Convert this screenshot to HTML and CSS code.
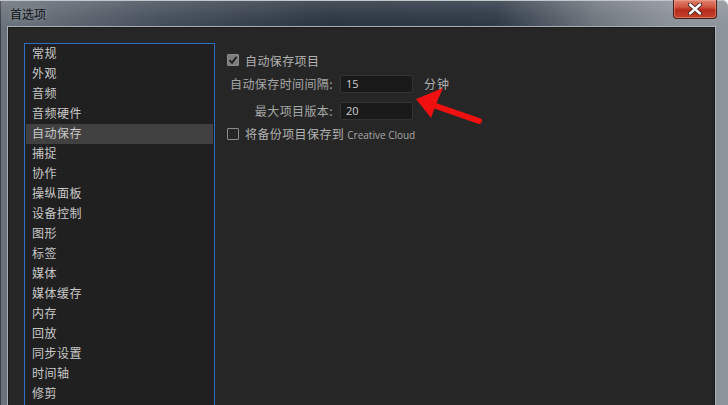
FILE: index.html
```html
<!DOCTYPE html>
<html lang="zh-CN">
<head>
<meta charset="utf-8">
<title>首选项</title>
<link rel="stylesheet" href="styles.css">
</head>
<body>
<div class="window">
  <div class="titlebar">
    <span class="title">首选项</span>
    <div class="close">
      <svg width="16" height="12" viewBox="0 0 16 12">
        <path d="M3 1.5 L13 10.5 M13 1.5 L3 10.5" stroke="#3a2020" stroke-width="4.2" stroke-linecap="round"/>
        <path d="M3 1.5 L13 10.5 M13 1.5 L3 10.5" stroke="#ffffff" stroke-width="2.4" stroke-linecap="round"/>
      </svg>
    </div>
  </div>
  <div class="client">
    <ul class="nav">
      <li>常规</li>
      <li>外观</li>
      <li>音频</li>
      <li>音频硬件</li>
      <li class="selected">自动保存</li>
      <li>捕捉</li>
      <li>协作</li>
      <li>操纵面板</li>
      <li>设备控制</li>
      <li>图形</li>
      <li>标签</li>
      <li>媒体</li>
      <li>媒体缓存</li>
      <li>内存</li>
      <li>回放</li>
      <li>同步设置</li>
      <li>时间轴</li>
      <li>修剪</li>
    </ul>
    <div class="panel">
      <div class="row row-check first">
        <span class="checkbox checked">
          <svg width="10" height="10" viewBox="0 0 10 10"><path d="M1.5 5.2 L4 7.8 L8.6 1.8" fill="none" stroke="#1e1e1e" stroke-width="1.8"/></svg>
        </span>
        <span class="check-label">自动保存项目</span>
      </div>
      <div class="row row-field">
        <span class="field-label">自动保存时间间隔:</span>
        <span class="input">15</span>
        <span class="unit">分钟</span>
      </div>
      <div class="row row-field">
        <span class="field-label">最大项目版本:</span>
        <span class="input">20</span>
      </div>
      <div class="row row-check last">
        <span class="checkbox"></span>
        <span class="check-label">将备份项目保存到 <span class="latin">Creative Cloud</span></span>
      </div>
    </div>
  </div>
  <svg class="arrow" width="728" height="405" viewBox="0 0 728 405">
    <line x1="433" y1="105" x2="479" y2="121" stroke="#f01010" stroke-width="6" stroke-linecap="round"/>
    <polygon points="416,99 443,88 436,104 431,118" fill="#f01010"/>
  </svg>
</div>
</body>
</html>
```
FILE: styles.css
```css
html, body {
  margin: 0;
  padding: 0;
  background: #ffffff;
}
body {
  width: 728px;
  height: 405px;
  overflow: hidden;
  font-family: "Noto Sans CJK SC", "Noto Sans", sans-serif;
}
.window {
  position: relative;
  width: 728px;
  height: 405px;
  display: flex;
  flex-direction: column;
  background:
    linear-gradient(90deg, #6a727b 0%, #5f6771 8%, #444e5a 22%, #2a3440 45%, #2d3845 68%, #6f767e 82%, #8b9198 92%, #8e949b 100%);
  border-top-right-radius: 6px;
  box-shadow: inset 0 1px 0 #b8bec4, inset 1px 0 0 #3a3f45;
}
.titlebar {
  height: 27px;
  flex: none;
  display: flex;
  align-items: flex-start;
  background: linear-gradient(180deg, rgba(255,255,255,0.14) 0%, rgba(255,255,255,0.04) 60%, rgba(0,0,0,0) 100%);
}
.title {
  padding-left: 10px;
  line-height: 27px;
  font-size: 12px;
  color: #101418;
  text-shadow: 0 0 6px rgba(255,255,255,0.35);
}
.close {
  margin-left: auto;
  margin-right: 11px;
  width: 42px;
  height: 18px;
  border: 1px solid #4a1e1a;
  border-top: none;
  border-radius: 0 0 4px 4px;
  background: linear-gradient(180deg, #e0836f 0%, #cf5440 40%, #b52b1a 55%, #c4442c 100%);
  box-shadow: inset 0 0 0 1px rgba(255,200,180,0.35);
  display: flex;
  align-items: center;
  justify-content: center;
}
.client {
  flex: 1;
  display: flex;
  align-items: flex-start;
  gap: 12px;
  margin: 0 13px 0 8px;
  padding: 15px 0 0 16px;
  background: #262626;
  border-top: 1px solid #1a1a1a;
  border-left: 1px solid #1a1a1a;
  border-right: 1px solid #1a1a1a;
  box-shadow: 0 0 0 1px #a9b0b7;
  overflow: hidden;
  min-height: 0;
}
.nav {
  list-style: none;
  margin: 0 0 0 -1px;
  padding: 0;
  width: 189px;
  flex: none;
  border: 1px solid #2d6fc4;
  background: #202020;
  height: 400px;
}
.nav li {
  height: 20px;
  line-height: 17px;
  padding: 0 0 0 6px;
  margin: 0 1px;
  font-size: 12px;
  letter-spacing: 0.5px;
  color: #c8c8c8;
  white-space: nowrap;
}
.nav li.selected {
  background: #414141;
}
.panel {
  padding-top: 7px;
  display: flex;
  flex-direction: column;
  font-size: 12px;
  color: #b2b2b2;
}
.row {
  display: flex;
  align-items: center;
}
.row-check.first {
  height: 20px;
}
.row-check.last {
  height: 19px;
}
.row-field {
  height: 27px;
}
.checkbox {
  width: 10px;
  height: 10px;
  border: 1px solid #8c8c8c;
  border-radius: 1px;
  background: #262626;
  display: flex;
  align-items: center;
  justify-content: center;
  margin-right: 6px;
  flex: none;
}
.checkbox.checked {
  background: #7d7d7d;
  border-color: #8a8a8a;
}
.check-label {
  letter-spacing: 0.4px;
  white-space: nowrap;
}
.latin {
  font-family: "Open Sans", "Noto Sans", sans-serif;
  font-size: 10px;
  letter-spacing: 0;
  color: #a8a8a8;
}
.field-label {
  width: 106px;
  text-align: right;
  color: #a6a6a6;
  letter-spacing: 0.4px;
  white-space: nowrap;
}
.input {
  margin-left: 7px;
  width: 66px;
  height: 16px;
  line-height: 16px;
  padding-left: 5px;
  background: #1a1a1a;
  border: 1px solid #333333;
  border-radius: 2px;
  font-family: "Open Sans", "Noto Sans", sans-serif;
  font-size: 11px;
  color: #d0d0d0;
}
.unit {
  margin-left: 11px;
  color: #b0b0b0;
  letter-spacing: 1px;
}
.arrow {
  position: absolute;
  left: 0;
  top: 0;
  pointer-events: none;
}
```
